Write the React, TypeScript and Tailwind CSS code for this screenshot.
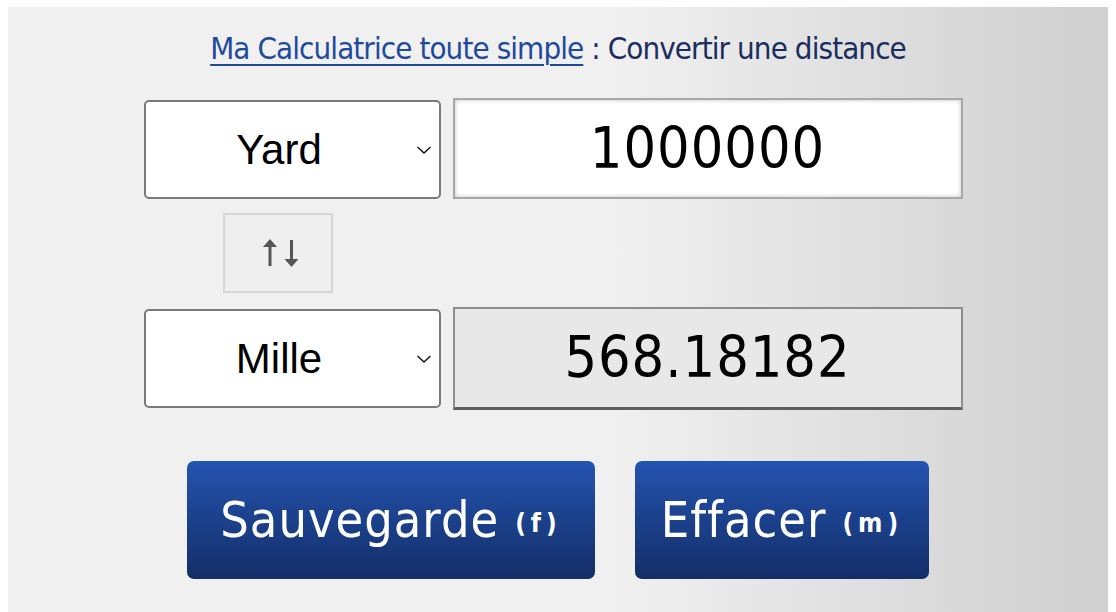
import React, { useState } from "react";

const units = ["Mètre", "Kilomètre", "Centimètre", "Pied", "Pouce", "Yard", "Mille"];

function UnitSelect({ value, onChange }: { value: string; onChange: (v: string) => void }) {
  return (
    <div className="relative h-[99px] w-[297px]">
      <select
        value={value}
        onChange={(e) => onChange(e.target.value)}
        className="h-full w-full appearance-none rounded-[5px] border-2 border-[#7a7a7a] bg-white pr-[26px] text-center text-[42px] text-black outline-none [text-align-last:center] font-['Liberation_Sans',Arial,sans-serif]"
      >
        {units.map((u) => (
          <option key={u} value={u}>
            {u}
          </option>
        ))}
      </select>
      {/* chevron du select */}
      <svg
        className="pointer-events-none absolute right-[9px] top-1/2 -translate-y-1/2"
        width="16"
        height="10"
        viewBox="0 0 16 10"
        fill="none"
      >
        <path d="M1.5 2 L8 8 L14.5 2" stroke="#111" strokeWidth="1.4" />
      </svg>
    </div>
  );
}

export default function App() {
  const [from, setFrom] = useState("Yard");
  const [to, setTo] = useState("Mille");

  return (
    <div className="min-h-screen bg-white px-2 pt-[7px]">
      <div className="flex h-[605px] flex-col items-center bg-[linear-gradient(to_right,#f0f0f0_55%,#cfcfcf)] font-['DejaVu_Sans_Condensed','DejaVu_Sans',sans-serif]">
        {/* ── TITRE ── */}
        <h1 className="mt-[21px] text-[31px] leading-[40px] tracking-[-0.9px] text-[#1b2d5e]">
          <a href="#" className="text-[#1e4a9c] underline decoration-2 underline-offset-[5px]">
            Ma Calculatrice toute simple
          </a>{" "}
          : Convertir une distance
        </h1>

        {/* ── CONVERSION ── */}
        <div className="mt-[30px] ml-[-10px] grid grid-cols-[297px_510px] gap-x-3">
          <div className="pt-[2px]">
            <UnitSelect value={from} onChange={setFrom} />
          </div>
          <div className="flex h-[101px] items-center justify-center border-2 border-[#a8a8a8] bg-white shadow-[inset_0_0_4px_rgba(0,0,0,0.25)] text-[57px] tracking-[1px] text-black">
            1000000
          </div>

          <div className="flex py-[14px] pl-[79px]">
            <button className="flex h-[80px] w-[110px] items-center justify-center border-2 border-[#d6d6d6] bg-[#efefef] pl-[2px]">
              <svg width="44" height="34" viewBox="0 0 44 34" fill="#555">
                {/* flèche haut */}
                <path d="M13 3 L6 11 L11.5 11 L11.5 30 L14.5 30 L14.5 11 L20 11 Z" />
                {/* flèche bas */}
                <path d="M34.5 31 L41.5 23 L36 23 L36 4 L33 4 L33 23 L27.5 23 Z" />
              </svg>
            </button>
          </div>
          <div />

          <div className="pt-[2px]">
            <UnitSelect value={to} onChange={setTo} />
          </div>
          <div className="flex h-[103px] items-center justify-center border-2 border-b-[3px] border-[#8c8c8c] border-b-[#5e5e5e] bg-[#e8e8e8] text-[57px] tracking-[1px] text-black">
            568.18182
          </div>
        </div>

        {/* ── BOUTONS ── */}
        <div className="mt-[51px] flex gap-10">
          <button className="flex h-[118px] w-[408px] items-center justify-center gap-4 rounded-[7px] bg-gradient-to-b from-[#2454b0] to-[#132e68] text-white">
            <span className="text-[50px] tracking-[1px]">Sauvegarde</span>
            <span className="mt-[6px] text-[26px] font-bold tracking-[5px]">(f)</span>
          </button>
          <button className="flex h-[118px] w-[294px] items-center justify-center gap-4 rounded-[7px] bg-gradient-to-b from-[#2454b0] to-[#132e68] text-white">
            <span className="text-[50px] tracking-[1px]">Effacer</span>
            <span className="mt-[6px] text-[26px] font-bold tracking-[5px]">(m)</span>
          </button>
        </div>
      </div>
    </div>
  );
}
